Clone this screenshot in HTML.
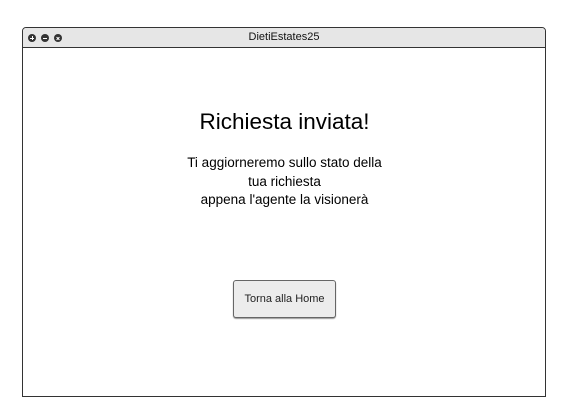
<!DOCTYPE html>
<html><head><style>
body{margin:0;width:577px;height:409px;background:#fff;font-family:"Liberation Sans",sans-serif;position:relative;overflow:hidden}
.win{position:absolute;left:22px;top:27px;width:522px;height:368px;border:1.5px solid #333;border-radius:4px 4px 0 0}
.bar{position:absolute;left:0;top:0;right:0;height:19px;background:#e6e6e6;border-bottom:1.5px solid #333;border-radius:3px 3px 0 0;font-size:11px;text-align:center;line-height:18px;color:#111}
.c{position:absolute;top:6px;width:8px;height:8px;border-radius:50%;background:#333}
.c::after{content:"";position:absolute;left:2px;top:3.5px;width:4px;height:1px;background:#fff}
.p::before{content:"";position:absolute;left:3.5px;top:2px;width:1px;height:4px;background:#fff}
.x::after{transform:rotate(45deg)}
.x::before{content:"";position:absolute;left:2px;top:3.5px;width:4px;height:1px;background:#fff;transform:rotate(-45deg)}
.t{position:absolute;left:0;width:569px;text-align:center;color:#000}
.btn{position:absolute;left:233px;top:280px;width:101px;height:36px;border:1px solid #666;border-radius:3px;background:#ececec;font-size:11px;line-height:36px;text-align:center;color:#222;box-shadow:0 1px 1px #999}
</style></head><body>
<div class="win"><div class="bar">DietiEstates25
<div class="c p" style="left:5px"></div><div class="c" style="left:18px"></div><div class="c x" style="left:31px"></div></div></div>
<div class="t" style="top:109px;font-size:22.5px">Richiesta inviata!</div>
<div class="t" style="top:154px;font-size:13.5px;line-height:18.5px">Ti aggiorneremo sullo stato della<br>tua richiesta<br>appena l'agente la visionerà</div>
<div class="btn">Torna alla Home</div>
</body></html>
